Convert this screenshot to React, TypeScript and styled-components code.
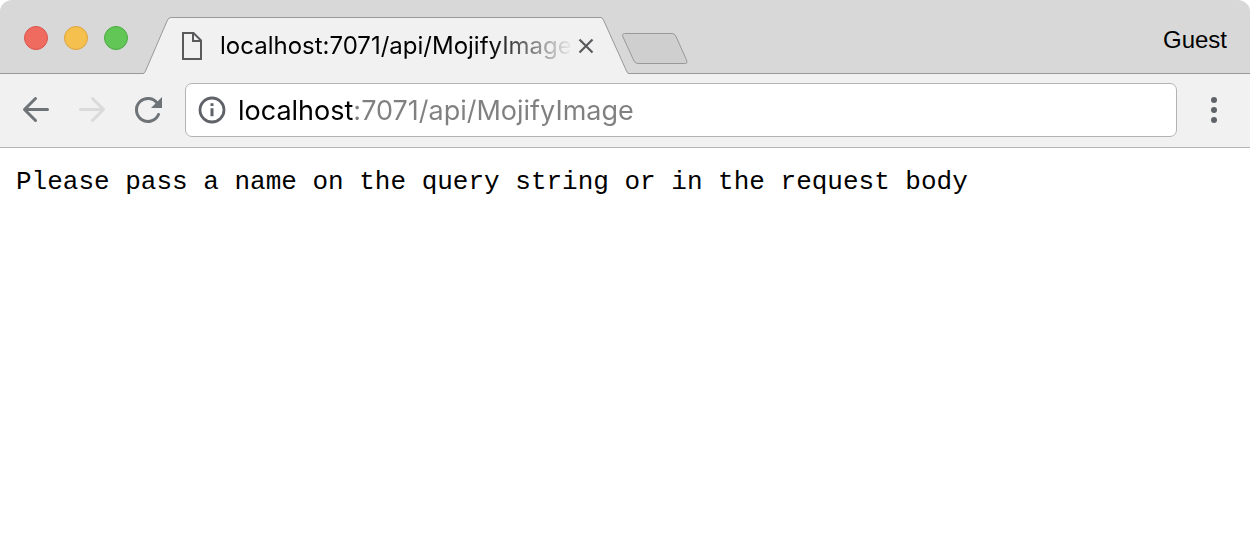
import React from "react";
import styled, { createGlobalStyle } from "styled-components";

const GlobalStyle = createGlobalStyle`
  * { box-sizing: border-box; }
  body { margin: 0; background: #ffffff; }
`;

const uiFont = `Inter, Roboto, "Liberation Sans", sans-serif`;

const Window = styled.div`
  display: flex;
  flex-direction: column;
  font-family: ${uiFont};
`;

const TabStrip = styled.header`
  display: flex;
  align-items: flex-end;
  height: 74px;
  padding: 0 23px 0 24px;
  background: #d8d8d8;
  border-radius: 12px 12px 0 0;
  box-shadow: inset 0 -1px 0 #999999;
`;

const WindowControls = styled.div`
  display: flex;
  gap: 16px;
  align-self: center;
  margin-top: 2px;
`;

const Light = styled.button<{ $fill: string; $edge: string }>`
  width: 24px;
  height: 24px;
  padding: 0;
  border: 1px solid ${(p) => p.$edge};
  border-radius: 50%;
  background: ${(p) => p.$fill};
`;

const Tab = styled.div`
  display: flex;
  height: 57px;
  margin-left: 15px;
`;

const TabEdge = styled.svg`
  display: block;
  flex: none;
  width: 28px;
  height: 57px;
`;

const TabBody = styled.div`
  display: flex;
  align-items: center;
  width: 430px;
  padding: 0 6px 0 10px;
  background: #f1f1f1;
  border-top: 1px solid #999999;
`;

const TabTitle = styled.span`
  flex: 1;
  min-width: 0;
  margin: 0 4px 0 17px;
  overflow: hidden;
  white-space: nowrap;
  font-size: 24px;
  line-height: 32px;
  color: #000000;
  mask-image: linear-gradient(to right, #000 calc(100% - 84px), transparent);
`;

const IconButton = styled.button`
  display: flex;
  flex: none;
  padding: 0;
  border: 0;
  background: transparent;
  svg { display: block; }
`;

const NewTab = styled(IconButton)`
  align-self: flex-end;
  margin: 0 0 8px -7px;
`;

const Guest = styled.button`
  align-self: center;
  margin-left: auto;
  margin-top: 6px;
  padding: 0;
  border: 0;
  background: transparent;
  font-family: "Liberation Sans", sans-serif;
  font-size: 24px;
  line-height: 28px;
  color: #000000;
`;

const Toolbar = styled.div`
  display: flex;
  align-items: center;
  height: 74px;
  padding: 0 20px 1px;
  background: #f1f1f1;
  border-bottom: 1px solid #b3b3b3;
`;

const NavButtons = styled.nav`
  display: flex;
  gap: 24px;
  margin-right: 21px;
`;

const AddressBar = styled.label`
  display: flex;
  flex: 1;
  align-items: center;
  min-width: 0;
  height: 54px;
  margin-right: 21px;
  padding: 0 12px;
  background: #ffffff;
  border: 1px solid #b3b3b3;
  border-radius: 7px;
`;

/* The host is drawn black and the rest of the address grey. */
const Address = styled.input`
  flex: 1;
  min-width: 0;
  height: 40px;
  margin-left: 12px;
  padding: 0;
  border: 0;
  outline: 0;
  font-family: ${uiFont};
  font-size: 27px;
  color: transparent;
  background: linear-gradient(to right, #000000 115px, #808080 115px);
  background-clip: text;
  -webkit-background-clip: text;
`;

const Page = styled.pre`
  margin: 0;
  padding: 18px 16px;
  font-family: "Liberation Mono", monospace;
  font-size: 26px;
  line-height: 32px;
  color: #000000;
  white-space: pre-wrap;
`;

export default function App() {
  return (
    <Window>
      <GlobalStyle />
      <TabStrip>
        <WindowControls>
          <Light $fill="#ef6b60" $edge="#d9544b" aria-label="Close window" />
          <Light $fill="#f6c04f" $edge="#dca33b" aria-label="Minimize window" />
          <Light $fill="#61c655" $edge="#4bab3f" aria-label="Zoom window" />
        </WindowControls>
        <Tab>
          <TabEdge viewBox="0 0 28 57" aria-hidden="true">
            <path d="M0 57 Q1.5 56.5 2.5 54 L24.5 3 Q25.8 .5 28 .5 V57Z" fill="#f1f1f1" />
            <path d="M0 56.5 Q1.5 56.5 2.5 54 L24.5 3 Q25.8 .5 28 .5" fill="none" stroke="#999999" />
          </TabEdge>
          <TabBody>
            <svg width="22" height="28" viewBox="0 0 22 28" fill="none" stroke="#5a5a5c" strokeWidth="2" aria-hidden="true">
              <path d="M2 1H12.5L20 8.5V27H2Z" />
              <path d="M12 1V9H20" />
            </svg>
            <TabTitle>localhost:7071/api/MojifyImage</TabTitle>
            <IconButton aria-label="Close tab">
              <svg width="18" height="18" viewBox="0 0 18 18" stroke="#5a5a5c" strokeWidth="2.2">
                <path d="M2.5 2.5 15.5 15.5M15.5 2.5 2.5 15.5" />
              </svg>
            </IconButton>
          </TabBody>
          <TabEdge viewBox="0 0 28 57" aria-hidden="true">
            <path d="M28 57 Q26.5 56.5 25.5 54 L2.5 3 Q1.2 .5 0 .5 V57Z" fill="#f1f1f1" />
            <path d="M28 56.5 Q26.5 56.5 25.5 54 L2.5 3 Q1.2 .5 0 .5" fill="none" stroke="#999999" />
          </TabEdge>
        </Tab>
        <NewTab aria-label="New tab">
          <svg width="66" height="34" viewBox="0 0 66 34">
            <path d="M2.5 1.5H50Q52.5 1.5 53.8 4L64.5 28Q66 31.5 63.5 31.5H16Q13.3 31.5 12 29L1 5Q-.5 1.5 2.5 1.5Z" fill="#cfcfcf" stroke="#999999" />
          </svg>
        </NewTab>
        <Guest>Guest</Guest>
      </TabStrip>
      <Toolbar>
        <NavButtons aria-label="History">
          <IconButton aria-label="Back">
            <svg width="32" height="32" viewBox="0 0 32 32" fill="none" stroke="#6e7378" strokeWidth="3" strokeLinecap="round" strokeLinejoin="round">
              <path d="M27.5 15.5H5M15.5 4.5 4.5 15.5 15.5 26.5" />
            </svg>
          </IconButton>
          <IconButton aria-label="Forward" disabled>
            <svg width="32" height="32" viewBox="0 0 32 32" fill="none" stroke="#dadada" strokeWidth="3" strokeLinecap="round" strokeLinejoin="round">
              <path d="M4.5 15.5H27M16.5 4.5 27.5 15.5 16.5 26.5" />
            </svg>
          </IconButton>
          <IconButton aria-label="Reload">
            <svg width="32" height="32" viewBox="0 0 32 32" fill="none">
              <path d="M26.5 20.5A11.5 11.5 0 1 1 25.5 9.5" stroke="#6e7378" strokeWidth="3" strokeLinecap="round" />
              <path d="M30 3V14H19Z" fill="#6e7378" />
            </svg>
          </IconButton>
        </NavButtons>
        <AddressBar>
          <svg width="28" height="28" viewBox="0 0 28 28" fill="none" role="img" aria-label="Site information">
            <circle cx="14" cy="14" r="12" stroke="#5f6368" strokeWidth="2.8" />
            <path d="M14 7.2V10M14 12.2V20.2" stroke="#5f6368" strokeWidth="3" />
          </svg>
          <Address type="text" aria-label="Address" defaultValue="localhost:7071/api/MojifyImage" spellCheck={false} />
        </AddressBar>
        <IconButton aria-label="Menu">
          <svg width="32" height="32" viewBox="0 0 32 32" fill="#5f6368">
            <circle cx="16" cy="6" r="3" />
            <circle cx="16" cy="16" r="3" />
            <circle cx="16" cy="26" r="3" />
          </svg>
        </IconButton>
      </Toolbar>
      <main>
        <Page>Please pass a name on the query string or in the request body</Page>
      </main>
    </Window>
  );
}
